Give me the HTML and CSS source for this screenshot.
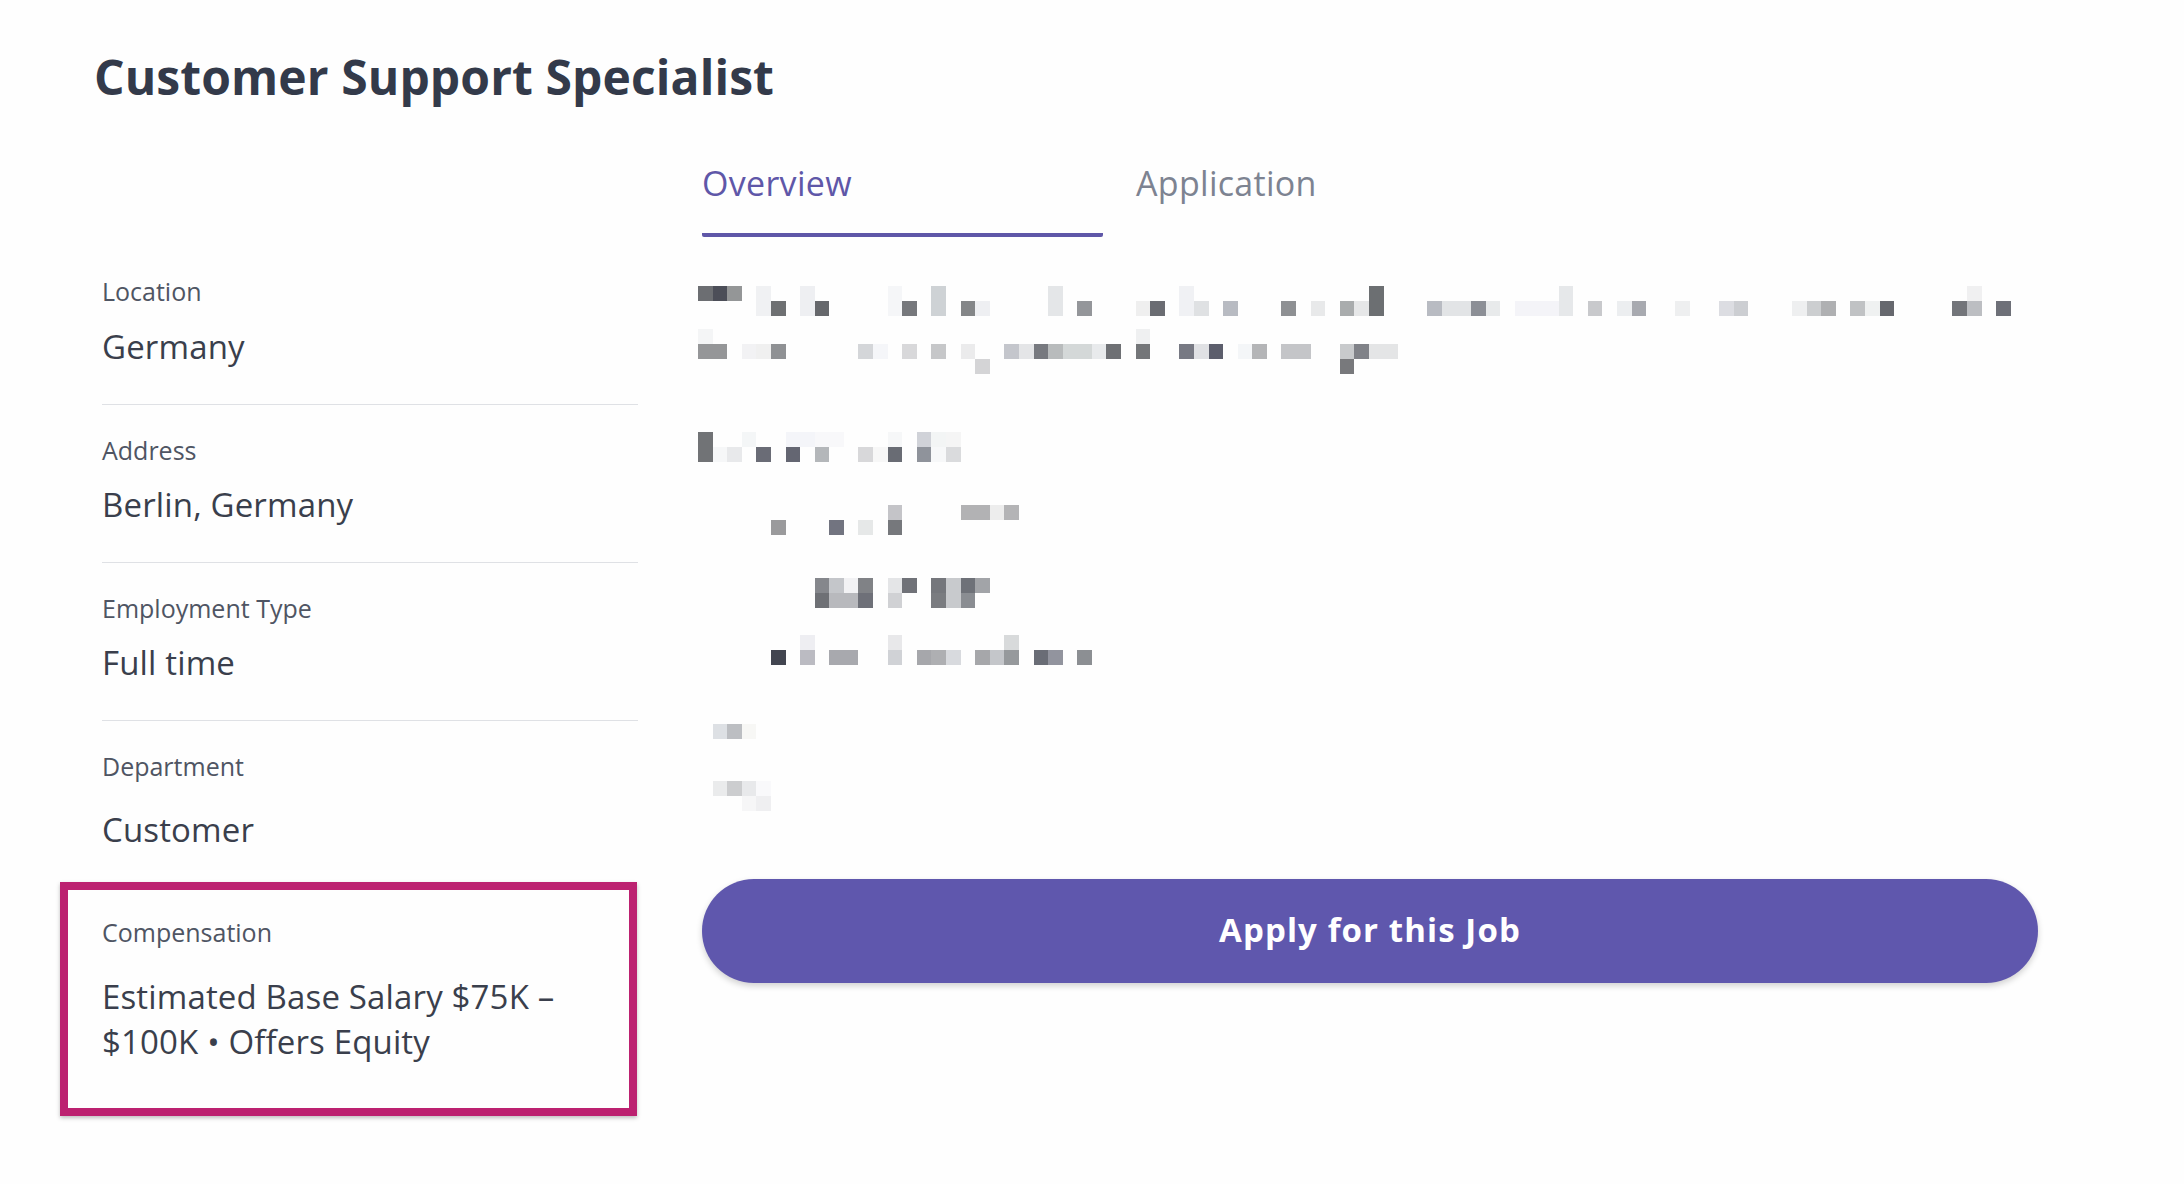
FILE: index.html
```html
<!DOCTYPE html>
<html>
<head>
<meta charset="utf-8">
<title>Customer Support Specialist</title>
<link rel="stylesheet" href="styles.css">
</head>
<body>
<h1 class="job_title">Customer Support Specialist</h1>
<div class="job_wrap">
	<div class="side_col">
		<div class="field">
			<div class="field_label">Location</div>
			<div class="field_value">Germany</div>
		</div>
		<div class="field">
			<div class="field_label">Address</div>
			<div class="field_value">Berlin, Germany</div>
		</div>
		<div class="field">
			<div class="field_label">Employment Type</div>
			<div class="field_value">Full time</div>
		</div>
		<div class="field field_dept">
			<div class="field_label">Department</div>
			<div class="field_value">Customer</div>
		</div>
		<div class="field field_marked">
			<div class="field_label">Compensation</div>
			<div class="field_value">Estimated Base Salary $75K – $100K • Offers Equity</div>
		</div>
	</div>
	<div class="main_col">
		<div class="tabs">
			<div class="tab tab_active">Overview</div>
			<div class="tab">Application</div>
		</div>
		<!-- description is pixelated in the original. x is in cells, y in px -->
		<svg class="blurred" viewBox="0 0 92 535" preserveAspectRatio="none" shape-rendering="crispEdges">
			<g>
				<rect x="0" y="0" width="1" height="15" fill="#6c6e72"/><rect x="1" y="0" width="1" height="15" fill="#4c4e58"/><rect x="2" y="0" width="1" height="15" fill="#949697"/>
				<rect x="4" y="0" width="1" height="30" fill="#f0f1f3"/><rect x="7" y="0" width="1" height="30" fill="#eeeff2"/><rect x="13" y="0" width="1" height="30" fill="#f5f6f8"/>
				<rect x="16" y="0" width="1" height="30" fill="#ced2d5"/><rect x="24" y="0" width="1" height="30" fill="#e4e6e8"/><rect x="33" y="0" width="1" height="30" fill="#f0f1f4"/>
				<rect x="46" y="0" width="1" height="30" fill="#6c6f72"/><rect x="59" y="0" width="1" height="30" fill="#e6e8ea"/><rect x="87" y="0" width="1" height="15" fill="#f0f0f1"/>
				<rect x="5" y="15" width="1" height="15" fill="#6e7072"/><rect x="8" y="15" width="1" height="15" fill="#66686c"/><rect x="14" y="15" width="1" height="15" fill="#76787c"/>
				<rect x="18" y="15" width="1" height="15" fill="#848688"/><rect x="19" y="15" width="1" height="15" fill="#eeeff2"/><rect x="26" y="15" width="1" height="15" fill="#94969a"/>
				<rect x="30" y="15" width="1" height="15" fill="#efefef"/><rect x="31" y="15" width="1" height="15" fill="#6a6c72"/><rect x="34" y="15" width="1" height="15" fill="#dfe1e3"/>
				<rect x="36" y="15" width="1" height="15" fill="#b8bbc2"/><rect x="40" y="15" width="1" height="15" fill="#8e9093"/><rect x="42" y="15" width="1" height="15" fill="#e8e9ea"/>
				<rect x="44" y="15" width="1" height="15" fill="#a9acad"/><rect x="45" y="15" width="1" height="15" fill="#e6e7e8"/><rect x="50" y="15" width="1" height="15" fill="#b8bbc2"/>
				<rect x="51" y="15" width="2" height="15" fill="#e2e4e6"/><rect x="53" y="15" width="1" height="15" fill="#8c8f96"/><rect x="54" y="15" width="1" height="15" fill="#e8eaeb"/>
				<rect x="56" y="15" width="3" height="15" fill="#f4f4f8"/><rect x="61" y="15" width="1" height="15" fill="#c8c9cc"/><rect x="63" y="15" width="1" height="15" fill="#eceef0"/>
				<rect x="64" y="15" width="1" height="15" fill="#a8aab0"/><rect x="67" y="15" width="1" height="15" fill="#eeeff0"/><rect x="70" y="15" width="1" height="15" fill="#dcdde2"/>
				<rect x="71" y="15" width="1" height="15" fill="#ccced2"/><rect x="75" y="15" width="1" height="15" fill="#eeeff0"/><rect x="76" y="15" width="1" height="15" fill="#ccced0"/>
				<rect x="77" y="15" width="1" height="15" fill="#afb0b2"/><rect x="79" y="15" width="1" height="15" fill="#c0c2c4"/><rect x="80" y="15" width="1" height="15" fill="#eff1f1"/>
				<rect x="81" y="15" width="1" height="15" fill="#66686e"/><rect x="86" y="15" width="1" height="15" fill="#73757a"/><rect x="87" y="15" width="1" height="15" fill="#bcbec2"/>
				<rect x="89" y="15" width="1" height="15" fill="#6e7078"/>
			</g>
			<g transform="translate(0,43)">
				<rect x="0" y="0" width="1" height="15" fill="#f4f5f6"/><rect x="30" y="0" width="1" height="15" fill="#eff0f1"/>
				<rect x="0" y="15" width="2" height="15" fill="#959698"/><rect x="3" y="15" width="1" height="15" fill="#f2f2f4"/><rect x="4" y="15" width="1" height="15" fill="#f0f0f0"/>
				<rect x="5" y="15" width="1" height="15" fill="#8f9194"/><rect x="11" y="15" width="1" height="15" fill="#d4d6d9"/><rect x="12" y="15" width="1" height="15" fill="#f5f6f9"/>
				<rect x="14" y="15" width="1" height="15" fill="#d8d8da"/><rect x="16" y="15" width="1" height="15" fill="#c6c7c9"/><rect x="18" y="15" width="1" height="15" fill="#ebebec"/>
				<rect x="21" y="15" width="1" height="15" fill="#c4c6cc"/><rect x="22" y="15" width="1" height="15" fill="#e4e5e7"/><rect x="23" y="15" width="1" height="15" fill="#77797f"/>
				<rect x="24" y="15" width="1" height="15" fill="#b8bbbc"/><rect x="25" y="15" width="2" height="15" fill="#d4d8d8"/><rect x="27" y="15" width="1" height="15" fill="#e8eaec"/>
				<rect x="28" y="15" width="1" height="15" fill="#6e7074"/><rect x="30" y="15" width="1" height="15" fill="#747679"/><rect x="33" y="15" width="1" height="15" fill="#777983"/>
				<rect x="34" y="15" width="1" height="15" fill="#e0e1e4"/><rect x="35" y="15" width="1" height="15" fill="#5c5e6c"/><rect x="37" y="15" width="1" height="15" fill="#f4f6f8"/>
				<rect x="38" y="15" width="1" height="15" fill="#b4b5b7"/><rect x="40" y="15" width="2" height="15" fill="#c4c5c8"/><rect x="44" y="15" width="1" height="15" fill="#c8cacc"/>
				<rect x="45" y="15" width="1" height="15" fill="#808288"/><rect x="46" y="15" width="2" height="15" fill="#e4e5e6"/>
				<rect x="19" y="30" width="1" height="15" fill="#d4d4d6"/><rect x="44" y="30" width="1" height="15" fill="#78797c"/>
			</g>
			<g transform="translate(0,146)">
				<rect x="0" y="0" width="1" height="30" fill="#717376"/><rect x="3" y="0" width="1" height="15" fill="#f4f6f7"/><rect x="6" y="0" width="2" height="15" fill="#f4f5f9"/>
				<rect x="8" y="0" width="2" height="15" fill="#f8f8fa"/><rect x="13" y="0" width="1" height="15" fill="#f6f7f8"/><rect x="15" y="0" width="1" height="15" fill="#d0d2d8"/>
				<rect x="16" y="0" width="1" height="15" fill="#f3f5f5"/><rect x="17" y="0" width="1" height="15" fill="#f5f5f5"/>
				<rect x="1" y="15" width="1" height="15" fill="#f6f7f8"/><rect x="2" y="15" width="1" height="15" fill="#e8e9eb"/><rect x="4" y="15" width="1" height="15" fill="#6a6c76"/>
				<rect x="6" y="15" width="1" height="15" fill="#646672"/><rect x="8" y="15" width="1" height="15" fill="#b4b7ba"/><rect x="11" y="15" width="1" height="15" fill="#d8d8da"/>
				<rect x="12" y="15" width="1" height="15" fill="#f7f7f7"/><rect x="13" y="15" width="1" height="15" fill="#696c74"/><rect x="15" y="15" width="1" height="15" fill="#8f939b"/>
				<rect x="16" y="15" width="1" height="15" fill="#f7f8f9"/><rect x="17" y="15" width="1" height="15" fill="#dadbdd"/>
			</g>
			<g transform="translate(0,219)">
				<rect x="13" y="0" width="1" height="15" fill="#c4c4c8"/><rect x="18" y="0" width="2" height="15" fill="#b2b2b4"/><rect x="20" y="0" width="1" height="15" fill="#ededed"/>
				<rect x="21" y="0" width="1" height="15" fill="#b4b4b6"/>
				<rect x="5" y="15" width="1" height="15" fill="#9a9a9c"/><rect x="9" y="15" width="1" height="15" fill="#727480"/><rect x="11" y="15" width="1" height="15" fill="#e6e8e8"/>
				<rect x="13" y="15" width="1" height="15" fill="#76787c"/>
			</g>
			<g transform="translate(0,292)">
				<rect x="8" y="0" width="1" height="15" fill="#85878c"/><rect x="9" y="0" width="1" height="15" fill="#c4c6ca"/><rect x="10" y="0" width="1" height="15" fill="#f2f2f4"/>
				<rect x="11" y="0" width="1" height="15" fill="#808286"/><rect x="13" y="0" width="1" height="15" fill="#e4e5e7"/><rect x="14" y="0" width="1" height="15" fill="#707278"/>
				<rect x="16" y="0" width="1" height="15" fill="#75777c"/><rect x="17" y="0" width="1" height="30" fill="#c8cacd"/><rect x="18" y="0" width="1" height="15" fill="#6e7178"/>
				<rect x="19" y="0" width="1" height="15" fill="#a2a4a8"/>
				<rect x="8" y="15" width="1" height="15" fill="#6e7075"/><rect x="9" y="15" width="2" height="15" fill="#b8b9bd"/><rect x="11" y="15" width="1" height="15" fill="#6e7078"/>
				<rect x="13" y="15" width="1" height="15" fill="#d0d1d4"/><rect x="16" y="15" width="1" height="15" fill="#7a7c80"/><rect x="18" y="15" width="1" height="15" fill="#8a8d92"/>
			</g>
			<g transform="translate(0,349)">
				<rect x="7" y="0" width="1" height="15" fill="#eeeef2"/><rect x="13" y="0" width="1" height="15" fill="#e8e8ea"/><rect x="21" y="0" width="1" height="15" fill="#d8dadb"/>
				<rect x="5" y="15" width="1" height="15" fill="#424550"/><rect x="7" y="15" width="1" height="15" fill="#bbbbc2"/><rect x="9" y="15" width="2" height="15" fill="#a8a9ae"/>
				<rect x="13" y="15" width="1" height="15" fill="#d0d2d6"/><rect x="15" y="15" width="1" height="15" fill="#a6a7ab"/><rect x="16" y="15" width="1" height="15" fill="#aeafb2"/>
				<rect x="17" y="15" width="1" height="15" fill="#d8dade"/><rect x="19" y="15" width="1" height="15" fill="#a6a7aa"/><rect x="20" y="15" width="1" height="15" fill="#c4c6ca"/>
				<rect x="21" y="15" width="1" height="15" fill="#96999c"/><rect x="23" y="15" width="1" height="15" fill="#6a6d76"/><rect x="24" y="15" width="1" height="15" fill="#92949e"/>
				<rect x="26" y="15" width="1" height="15" fill="#8c8f93"/>
			</g>
			<g transform="translate(0,438)">
				<rect x="1" y="0" width="1" height="15" fill="#dde0e4"/><rect x="2" y="0" width="1" height="15" fill="#bcbec2"/><rect x="3" y="0" width="1" height="15" fill="#f7f7f5"/>
			</g>
			<g transform="translate(0,495)">
				<rect x="1" y="0" width="1" height="15" fill="#eaebec"/><rect x="2" y="0" width="1" height="15" fill="#cccdcf"/><rect x="3" y="0" width="1" height="15" fill="#e8e9eb"/>
				<rect x="4" y="0" width="1" height="15" fill="#f9f9fb"/><rect x="3" y="15" width="1" height="15" fill="#f6f6f7"/><rect x="4" y="15" width="1" height="15" fill="#efeff1"/>
			</g>
		</svg>
		<div class="apply_btn">Apply for this Job</div>
	</div>
</div>
</body>
</html>
```

FILE: styles.css
```css
html, body {
	margin: 0;
	background: #fefefe;
}
body {
	width: 2184px;
	height: 1184px;
	overflow: hidden;
	font-family: "Open Sans", "Liberation Sans", sans-serif;
	color: #3a3f4c;
}
.job_title {
	margin: 0 0 40px 0;
	padding: 47px 0 0 94px;
	font-size: 48px;
	line-height: 60px;
	font-weight: 700;
	letter-spacing: 0.1px;
	color: #333a4a;
}
.job_wrap {
	display: grid;
	grid-template-columns: 536px 1336px;
	column-gap: 64px;
	padding-left: 102px;
}
.side_col {
	padding-top: 127px;
}
.field {
	padding: 28px 0 35px 0;
	border-bottom: 1.5px solid #dfe1e5;
}
.field:first-child {
	padding-top: 0;
}
.field_label {
	font-size: 25px;
	line-height: 34px;
	color: #4f5563;
}
.field_value {
	margin-top: 15px;
	font-size: 33px;
	line-height: 45px;
	letter-spacing: 0.15px;
	color: #3a3f4c;
}
.field:first-child .field_value {
	margin-top: 16px;
}
.field_dept {
	padding-bottom: 30px;
	border-bottom: 0;
}
.field_dept .field_value {
	margin-top: 24px;
}
.field_marked {
	box-sizing: border-box;
	width: 577px;
	margin-left: -42px;
	padding: 25px 0 44px 34px;
	border: 8px solid #bc2170;
	box-shadow: 0 2px 4px rgba(0, 0, 0, 0.25);
}
.field_marked .field_value {
	margin-top: 25px;
}
.tabs {
	display: flex;
	height: 90px;
}
.tab {
	box-sizing: border-box;
	width: 401px;
	margin-right: 33px;
	padding-top: 14px;
	font-size: 34px;
	line-height: 44px;
	font-weight: 500;
	letter-spacing: 0.3px;
	color: #7d8391;
}
.tab_active {
	color: #5f57a8;
	border-bottom: 4px solid #5f57a8;
	border-radius: 2px;
}
.blurred {
	display: block;
	width: 1342px;
	height: 535px;
	margin: 49px 0 0 -4px;
}
.apply_btn {
	height: 104px;
	margin-top: 58px;
	border-radius: 52px;
	background: #5f57ad;
	box-shadow: 0 3px 6px rgba(0, 0, 0, 0.18);
	font-size: 33px;
	line-height: 102px;
	font-weight: 700;
	letter-spacing: 1.1px;
	text-align: center;
	color: #fff;
}
```
